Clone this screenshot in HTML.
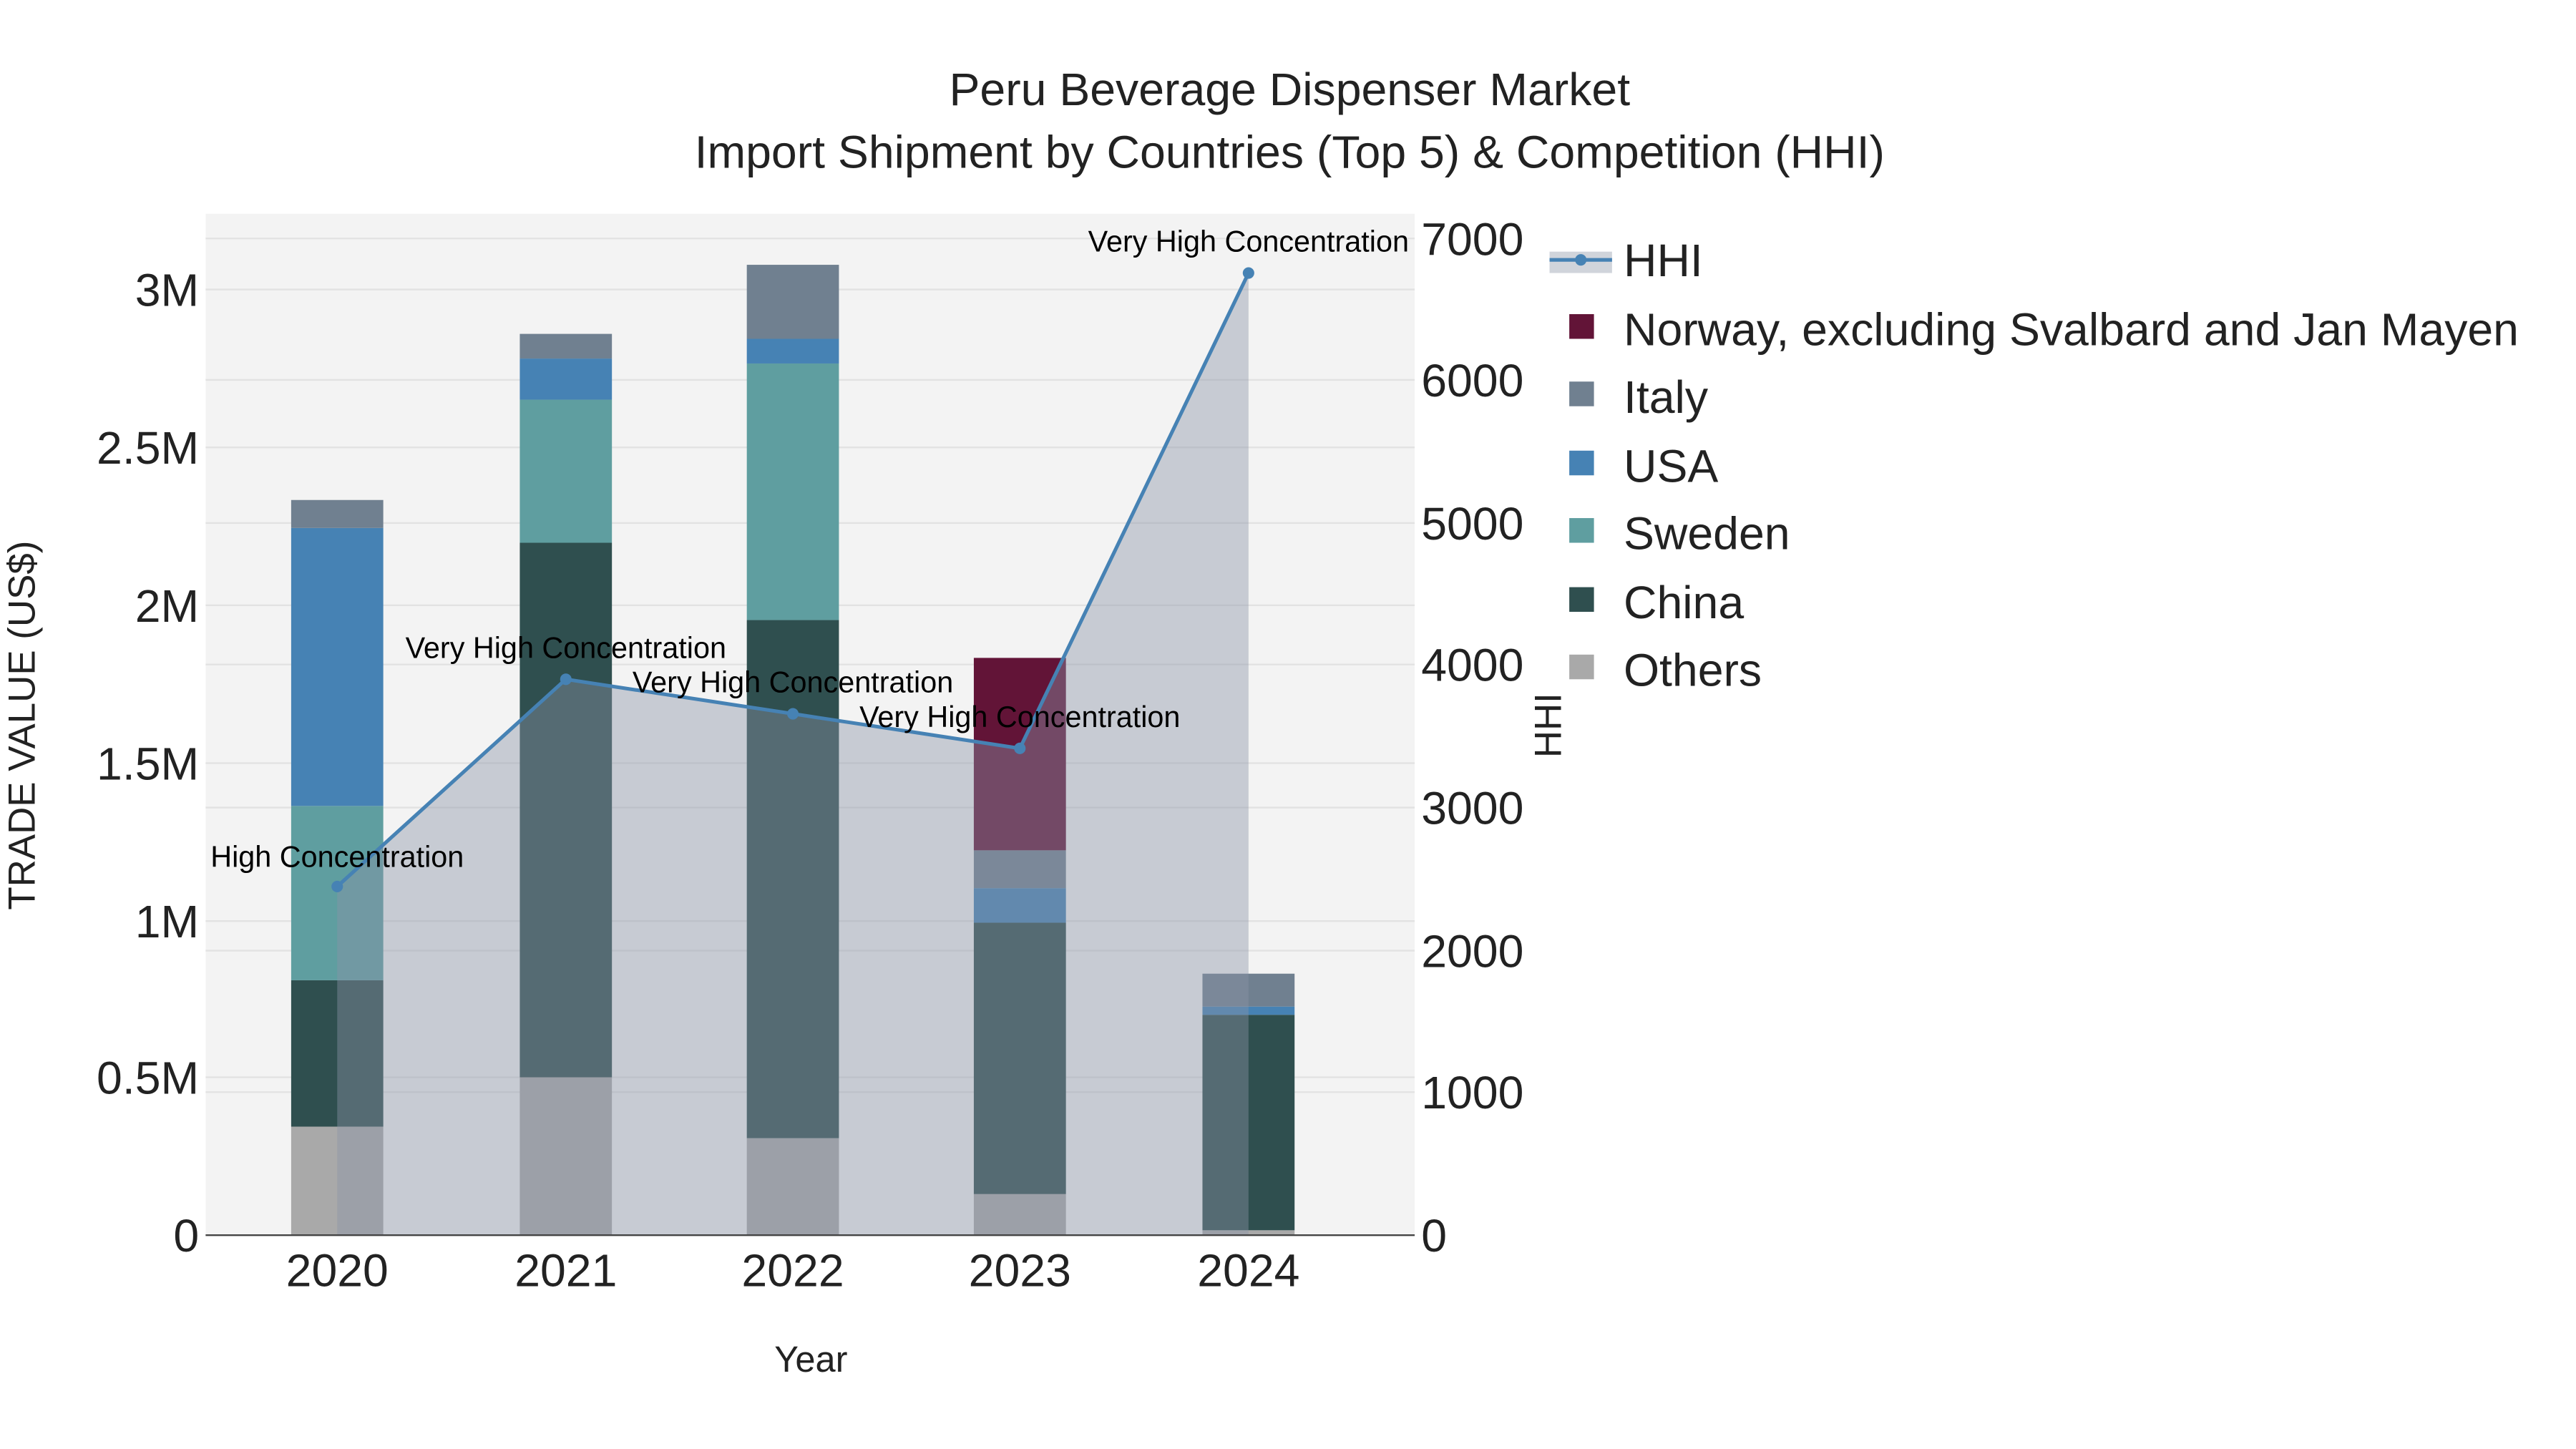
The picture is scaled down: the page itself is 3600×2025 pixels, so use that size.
<!DOCTYPE html>
<html><head><meta charset="utf-8"><style>
html,body{margin:0;padding:0;background:#fff;}
svg{display:block;font-family:"Liberation Sans",sans-serif;}
</style></head><body>
<svg width="3600" height="2025" viewBox="0 0 1566 881" preserveAspectRatio="none" xmlns="http://www.w3.org/2000/svg">
<rect width="1566" height="881" fill="#fff"/>
<rect x="125" y="130" width="735" height="621" fill="#f3f3f3"/>
<g stroke="#e2e2e2" stroke-width="1">
<line x1="125" x2="860" y1="176" y2="176"/><line x1="125" x2="860" y1="272" y2="272"/>
<line x1="125" x2="860" y1="368" y2="368"/><line x1="125" x2="860" y1="464" y2="464"/>
<line x1="125" x2="860" y1="560" y2="560"/><line x1="125" x2="860" y1="655" y2="655"/>
<line x1="125" x2="860" y1="145" y2="145"/><line x1="125" x2="860" y1="231" y2="231"/>
<line x1="125" x2="860" y1="318" y2="318"/><line x1="125" x2="860" y1="404" y2="404"/>
<line x1="125" x2="860" y1="491" y2="491"/><line x1="125" x2="860" y1="578" y2="578"/>
<line x1="125" x2="860" y1="664" y2="664"/>
</g>
<g>
<rect x="177" y="685" width="56" height="66" fill="#a9a9a9"/>
<rect x="177" y="596" width="56" height="89" fill="#2f4f4f"/>
<rect x="177" y="490" width="56" height="106" fill="#5f9ea0"/>
<rect x="177" y="321" width="56" height="169" fill="#4682b4"/>
<rect x="177" y="304" width="56" height="17" fill="#708090"/>

<rect x="316" y="655" width="56" height="96" fill="#a9a9a9"/>
<rect x="316" y="330" width="56" height="325" fill="#2f4f4f"/>
<rect x="316" y="243" width="56" height="87" fill="#5f9ea0"/>
<rect x="316" y="218" width="56" height="25" fill="#4682b4"/>
<rect x="316" y="203" width="56" height="15" fill="#708090"/>

<rect x="454" y="692" width="56" height="59" fill="#a9a9a9"/>
<rect x="454" y="377" width="56" height="315" fill="#2f4f4f"/>
<rect x="454" y="221" width="56" height="156" fill="#5f9ea0"/>
<rect x="454" y="206" width="56" height="15" fill="#4682b4"/>
<rect x="454" y="161" width="56" height="45" fill="#708090"/>

<rect x="592" y="726" width="56" height="25" fill="#a9a9a9"/>
<rect x="592" y="561" width="56" height="165" fill="#2f4f4f"/>
<rect x="592" y="540" width="56" height="21" fill="#4682b4"/>
<rect x="592" y="517" width="56" height="23" fill="#708090"/>
<rect x="592" y="400" width="56" height="117" fill="#621437"/>

<rect x="731" y="748" width="56" height="3" fill="#a9a9a9"/>
<rect x="731" y="617" width="56" height="131" fill="#2f4f4f"/>
<rect x="731" y="612" width="56" height="5" fill="#4682b4"/>
<rect x="731" y="592" width="56" height="20" fill="#708090"/>
</g>
<polygon points="205,751 205,539 344,413 482,434 620,455 759,166 759,751" fill="#8a94a6" fill-opacity="0.42"/>
<polyline points="205,539 344,413 482,434 620,455 759,166" fill="none" stroke="#4682b4" stroke-width="2.2"/>
<g fill="#4682b4"><circle cx="205" cy="539" r="3.5"/><circle cx="344" cy="413" r="3.5"/><circle cx="482" cy="434" r="3.5"/><circle cx="620" cy="455" r="3.5"/><circle cx="759" cy="166" r="3.5"/></g>
<line x1="125" x2="860" y1="751" y2="751" stroke="#444" stroke-width="1"/>
<g font-size="18" fill="#000" text-anchor="middle">
<text x="205" y="527">High Concentration</text>
<text x="344" y="400">Very High Concentration</text>
<text x="482" y="421">Very High Concentration</text>
<text x="620" y="442">Very High Concentration</text>
<text x="759" y="153">Very High Concentration</text>
</g>
<g font-size="28" fill="#222" text-anchor="end">
<text x="121" y="186">3M</text><text x="121" y="282">2.5M</text><text x="121" y="378">2M</text>
<text x="121" y="474">1.5M</text><text x="121" y="570">1M</text><text x="121" y="665">0.5M</text><text x="121" y="761">0</text>
</g>
<g font-size="28" fill="#222" text-anchor="start">
<text x="864" y="155">7000</text><text x="864" y="241">6000</text><text x="864" y="328">5000</text>
<text x="864" y="414">4000</text><text x="864" y="501">3000</text><text x="864" y="588">2000</text>
<text x="864" y="674">1000</text><text x="864" y="761">0</text>
</g>
<g font-size="28" fill="#222" text-anchor="middle">
<text x="205" y="782">2020</text><text x="344" y="782">2021</text><text x="482" y="782">2022</text>
<text x="620" y="782">2023</text><text x="759" y="782">2024</text>
</g>
<text x="493" y="834" font-size="22" text-anchor="middle" fill="#222">Year</text>
<text transform="translate(21,441) rotate(-90)" font-size="23" text-anchor="middle" fill="#222">TRADE VALUE (US$)</text>
<text transform="translate(949,441) rotate(-90)" font-size="23" text-anchor="middle" fill="#222">HHI</text>
<g font-size="28" fill="#222" text-anchor="middle">
<text x="784" y="64">Peru Beverage Dispenser Market</text>
<text x="784" y="102">Import Shipment by Countries (Top 5) &amp; Competition (HHI)</text>
</g>
<g font-size="28" fill="#222">
<rect x="942" y="153" width="38" height="13" fill="#8a94a6" fill-opacity="0.4"/>
<line x1="942" x2="980" y1="158" y2="158" stroke="#4682b4" stroke-width="2.2"/>
<circle cx="961" cy="158" r="3.5" fill="#4682b4"/>
<text x="987" y="168">HHI</text>
<rect x="954" y="191" width="15" height="15" fill="#621437"/><text x="987" y="210">Norway, excluding Svalbard and Jan Mayen</text>
<rect x="954" y="232" width="15" height="15" fill="#708090"/><text x="987" y="251">Italy</text>
<rect x="954" y="274" width="15" height="15" fill="#4682b4"/><text x="987" y="293">USA</text>
<rect x="954" y="315" width="15" height="15" fill="#5f9ea0"/><text x="987" y="334">Sweden</text>
<rect x="954" y="357" width="15" height="15" fill="#2f4f4f"/><text x="987" y="376">China</text>
<rect x="954" y="398" width="15" height="15" fill="#a9a9a9"/><text x="987" y="417">Others</text>
</g>
</svg>
</body></html>
